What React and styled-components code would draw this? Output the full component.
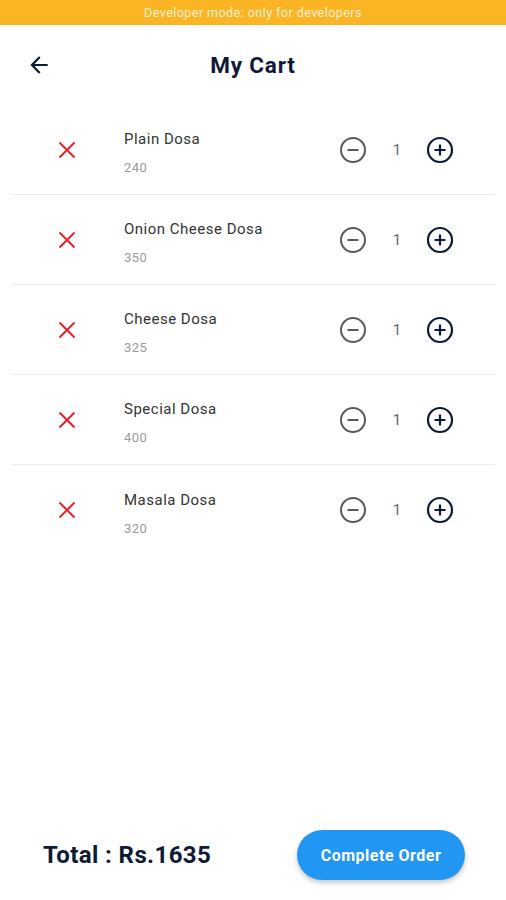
import React, { useState } from "react";
import styled, { createGlobalStyle } from "styled-components";

const GlobalStyle = createGlobalStyle`
  * {
    box-sizing: border-box;
  }
  body {
    margin: 0;
    background: #ffffff;
    font-family: Roboto, "Noto Sans", "Liberation Sans", sans-serif;
  }
`;

const Page = styled.div`
  display: flex;
  flex-direction: column;
  min-height: 100vh;
  width: 506px;
  background: #fff;
`;

const Banner = styled.div`
  height: 25px;
  background: #fbb424;
  color: #fdf1d6;
  font-size: 12.5px;
  letter-spacing: 0.45px;
  display: flex;
  align-items: center;
  justify-content: center;
`;

const Header = styled.div`
  height: 80px;
  display: grid;
  grid-template-columns: 80px 1fr 80px;
  align-items: center;
`;

const BackButton = styled.button`
  border: 0;
  background: none;
  padding: 0 0 0 26px;
  display: flex;
  align-items: center;
  color: #0f1a36;
  cursor: pointer;
`;

const Title = styled.h1`
  margin: 0;
  text-align: center;
  font-size: 22.5px;
  font-weight: 700;
  letter-spacing: 0.8px;
  color: #0f1a36;
`;

const List = styled.div`
  margin: 0 11px 0 12px;
  flex: 1;
`;

const Row = styled.div`
  height: 90px;
  display: flex;
  align-items: center;
  padding: 0 41px 0 46px;
  border-bottom: ${(p) => (p.$last ? "none" : "1px solid #ececec")};
`;

const RemoveButton = styled.button`
  border: 0;
  background: none;
  padding: 0;
  width: 18px;
  display: flex;
  color: #e8232b;
  cursor: pointer;
`;

const Info = styled.div`
  flex: 1;
  margin-left: 48px;
  display: flex;
  flex-direction: column;
  gap: 12px;
  padding-top: 6px;
`;

const Name = styled.span`
  font-size: 15px;
  color: #333;
  letter-spacing: 0.5px;
`;

const Price = styled.span`
  font-size: 13px;
  color: #9a9a9a;
  letter-spacing: 0.5px;
`;

const Counter = styled.div`
  display: flex;
  align-items: center;
`;

const RoundIcon = styled.button`
  border: 0;
  background: none;
  padding: 0;
  display: flex;
  color: ${(p) => p.$color};
  cursor: pointer;
`;

const Qty = styled.span`
  width: 10px;
  margin: 0 24px 0 25px;
  text-align: center;
  font-size: 15px;
  color: #666;
`;

const Footer = styled.div`
  display: flex;
  align-items: center;
  justify-content: space-between;
  padding: 0 41px 20px 43px;
`;

const Total = styled.div`
  font-size: 24px;
  font-weight: 700;
  letter-spacing: 0.4px;
  color: #0f1a36;
`;

const OrderButton = styled.button`
  width: 168px;
  height: 50px;
  border: 0;
  border-radius: 25px;
  background: #2196f3;
  color: #fff;
  font-family: inherit;
  font-size: 16px;
  font-weight: 700;
  letter-spacing: 0.5px;
  box-shadow: 0 3px 5px rgba(0, 0, 0, 0.22);
  cursor: pointer;
`;

const ArrowBack = () => (
  <svg width="26" height="26" viewBox="0 0 24 24" fill="currentColor">
    <path d="M20 11H7.83l5.59-5.59L12 4l-8 8 8 8 1.41-1.41L7.83 13H20v-2z" />
  </svg>
);

const CloseIcon = () => (
  <svg width="18" height="18" viewBox="0 0 18 18" stroke="currentColor" strokeWidth="2" fill="none">
    <path d="M1.5 1.5 16.5 16.5M16.5 1.5 1.5 16.5" />
  </svg>
);

const MinusCircle = () => (
  <svg width="28" height="28" viewBox="0 0 28 28" fill="none" stroke="currentColor" strokeWidth="2">
    <circle cx="14" cy="14" r="12" />
    <path d="M8.5 14h11" />
  </svg>
);

const PlusCircle = () => (
  <svg width="28" height="28" viewBox="0 0 28 28" fill="none" stroke="currentColor" strokeWidth="2.2">
    <circle cx="14" cy="14" r="12" />
    <path d="M8.5 14h11M14 8.5v11" />
  </svg>
);

const initialItems = [
  { id: 1, name: "Plain Dosa", price: 240, qty: 1 },
  { id: 2, name: "Onion Cheese Dosa", price: 350, qty: 1 },
  { id: 3, name: "Cheese Dosa", price: 325, qty: 1 },
  { id: 4, name: "Special Dosa", price: 400, qty: 1 },
  { id: 5, name: "Masala Dosa", price: 320, qty: 1 },
];

function App() {
  const [items, setItems] = useState(initialItems);

  const changeQty = (id, d) => {
    setItems((list) =>
      list.map((it) => (it.id === id ? { ...it, qty: Math.max(1, it.qty + d) } : it))
    );
  };
  const removeItem = (id) => setItems((list) => list.filter((it) => it.id !== id));

  const total = items.reduce((sum, it) => sum + it.price * it.qty, 0);

  return (
    <Page>
      <GlobalStyle />
      <Banner>Developer mode: only for developers</Banner>
      <Header>
        <BackButton aria-label="back">
          <ArrowBack />
        </BackButton>
        <Title>My Cart</Title>
        <div />
      </Header>
      <List>
        {items.map((it, i) => (
          <Row key={it.id} $last={i === items.length - 1}>
            <RemoveButton onClick={() => removeItem(it.id)} aria-label="remove">
              <CloseIcon />
            </RemoveButton>
            <Info>
              <Name>{it.name}</Name>
              <Price>{it.price}</Price>
            </Info>
            <Counter>
              <RoundIcon $color="#5a5a5a" onClick={() => changeQty(it.id, -1)}>
                <MinusCircle />
              </RoundIcon>
              <Qty>{it.qty}</Qty>
              <RoundIcon $color="#0f1a36" onClick={() => changeQty(it.id, 1)}>
                <PlusCircle />
              </RoundIcon>
            </Counter>
          </Row>
        ))}
      </List>
      <Footer>
        <Total>Total : Rs.{total}</Total>
        <OrderButton>Complete Order</OrderButton>
      </Footer>
    </Page>
  );
}

export default App;
